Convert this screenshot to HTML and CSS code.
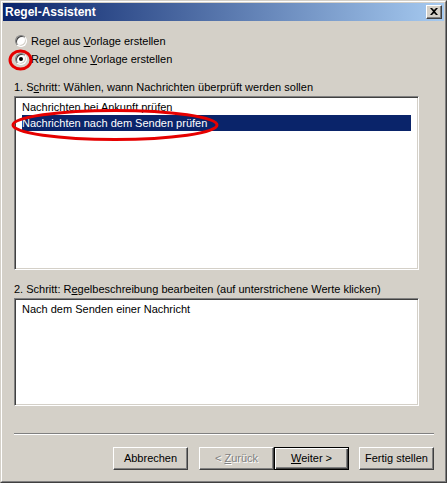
FILE: index.html
```html
<!DOCTYPE html>
<html lang="de">
<head>
<meta charset="utf-8">
<title>Regel-Assistent</title>
<link rel="stylesheet" href="styles.css">
</head>
<body>
<div class="window">
  <div class="frame">
    <div class="titlebar">
      <span class="title">Regel-Assistent</span>
      <div class="close">
        <svg width="8" height="7" viewBox="0 0 8 7"><path d="M0 0h2l2 2 2-2h2L5 3.5 8 7H6L4 5 2 7H0l3-3.5z" fill="#000"/></svg>
      </div>
    </div>
    <div class="content">
      <div class="radios">
        <div class="radio"><span class="rb"></span><span class="rlabel">Regel aus <u>V</u>orlage erstellen</span></div>
        <div class="radio"><span class="rb checked"></span><span class="rlabel">Regel ohne <u>V</u>orlage erstellen</span></div>
      </div>
      <div class="step step1">1. S<u>c</u>hritt: Wählen, wann Nachrichten überprüft werden sollen</div>
      <div class="listbox list1">
        <div class="item">Nachrichten bei Ankunft prüfen</div>
        <div class="item selected">Nachrichten nach dem Senden prüfen</div>
      </div>
      <div class="step step2">2. Schritt: R<u>e</u>gelbeschreibung bearbeiten (auf unterstrichene Werte klicken)</div>
      <div class="listbox list2">
        <div class="item">Nach dem Senden einer Nachricht</div>
      </div>
      <div class="separator"></div>
      <div class="buttons">
        <div class="btn btn-cancel"><span>Abbrechen</span></div>
        <div class="btn disabled"><span>&lt; <u>Z</u>urück</span></div>
        <div class="btn default"><span><u>W</u>eiter &gt;</span></div>
        <div class="btn btn-finish"><span>Fertig stellen</span></div>
      </div>
    </div>
  </div>
  <svg class="marks" width="447" height="483" viewBox="0 0 447 483">
    <ellipse cx="20.5" cy="60" rx="10.5" ry="9" fill="none" stroke="#e60000" stroke-width="3"/>
    <ellipse cx="115" cy="125" rx="102" ry="14.5" fill="none" stroke="#e60000" stroke-width="3"/>
  </svg>
</div>
</body>
</html>
```
FILE: styles.css
```css
* { box-sizing: border-box; }
html, body { margin: 0; padding: 0; background: #d4d0c8; }
body {
  font-family: "Liberation Sans", Arial, sans-serif;
  font-size: 11px;
  color: #000;
}
.window {
  position: relative;
  width: 447px;
  height: 483px;
  background: #d4d0c8;
  border: 1px solid;
  border-color: #d4d0c8 #404040 #404040 #d4d0c8;
}
.frame {
  height: 100%;
  border: 1px solid;
  border-color: #fff #808080 #808080 #fff;
  padding: 1px;
  display: flex;
  flex-direction: column;
}
.titlebar {
  height: 18px;
  flex: none;
  background: linear-gradient(to right, #0a246a, #a6caf0);
  display: flex;
  align-items: center;
  justify-content: space-between;
  padding: 0 2px 0 2px;
}
.title {
  color: #fff;
  font-weight: bold;
  font-size: 12px;
  line-height: 18px;
}
.close {
  width: 16px;
  height: 14px;
  background: #d4d0c8;
  border: 1px solid;
  border-color: #fff #404040 #404040 #fff;
  box-shadow: inset -1px -1px #808080;
  display: flex;
  align-items: center;
  justify-content: center;
  padding: 0 0 1px 0;
}
.close svg { display: block; }
.content {
  flex: 1;
  padding: 11px 10px 0 11px;
  display: flex;
  flex-direction: column;
}
.radio {
  height: 18px;
  display: flex;
  align-items: center;
  padding-left: 1px;
}
.rb {
  width: 12px;
  height: 12px;
  border-radius: 50%;
  background: #fff;
  border: 1px solid;
  border-color: #808080 #fff #fff #808080;
  box-shadow: inset 1px 1px #404040, inset -1px -1px #d4d0c8;
  position: relative;
  flex: none;
}
.rb.checked::after {
  content: "";
  position: absolute;
  left: 3px;
  top: 3px;
  width: 4px;
  height: 4px;
  border-radius: 50%;
  background: #000;
}
.rlabel { margin-left: 4px; white-space: nowrap; }
u { text-decoration: underline; text-underline-offset: 1px; }
.step {
  line-height: 14px;
  white-space: nowrap;
  margin-top: 12px;
}
.listbox {
  width: 405px;
  margin-top: 2px;
  background: #fff;
  border: 1px solid;
  border-color: #808080 #fff #fff #808080;
  box-shadow: inset 1px 1px #404040, inset -1px -1px #d4d0c8;
  padding: 2px 7px 0 7px;
}
.list1 { height: 174px; }
.list2 { height: 108px; }
.item {
  height: 16px;
  line-height: 16px;
  white-space: nowrap;
}
.item.selected {
  background: #0a246a;
  color: #fff;
}
.separator {
  margin-top: 27px;
  height: 2px;
  border-top: 1px solid #808080;
  border-bottom: 1px solid #fff;
}
.buttons {
  margin-top: 12px;
  display: flex;
  justify-content: flex-end;
}
.btn {
  width: 75px;
  height: 23px;
  border: 1px solid;
  border-color: #fff #404040 #404040 #fff;
  box-shadow: inset -1px -1px #808080;
  display: flex;
  align-items: center;
  justify-content: center;
  white-space: pre;
  padding-bottom: 1px;
}
.btn-cancel { margin-right: 11px; }
.default {
  border-color: #000;
  box-shadow: inset 1px 1px #fff, inset -1px -1px #404040, inset -2px -2px #808080;
  margin-right: 10px;
}
.disabled {
  color: #808080;
  text-shadow: 1px 1px #fff;
}
.marks {
  position: absolute;
  left: -1px;
  top: -1px;
  pointer-events: none;
}
```
